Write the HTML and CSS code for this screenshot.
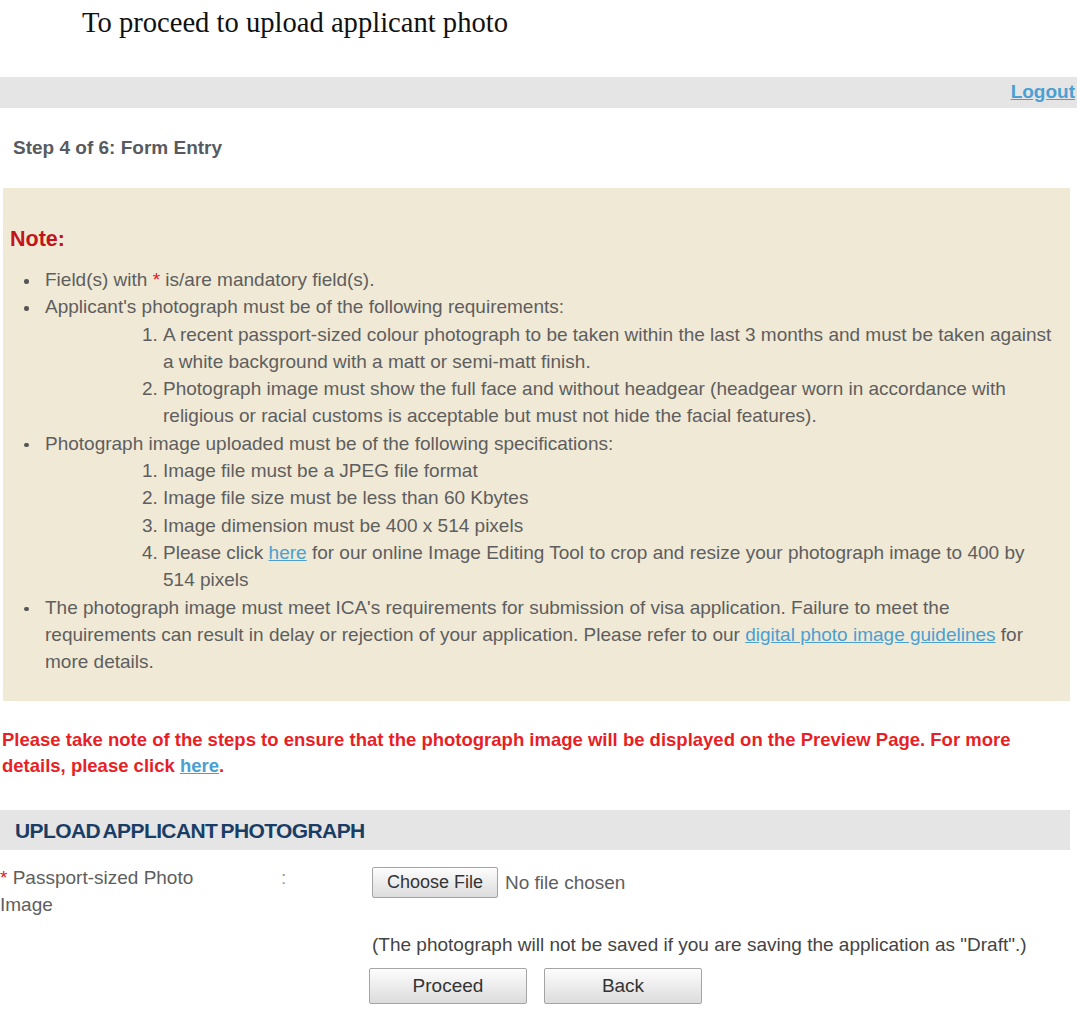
FILE: index.html
```html
<!DOCTYPE html>
<html>
<head>
<meta charset="utf-8">
<link rel="stylesheet" href="styles.css">
</head>
<body>
<h1 class="doc-title">To proceed to upload applicant photo</h1>
<div class="topbar"><a class="logout" href="#">Logout</a></div>
<div class="step">Step 4 of 6: Form Entry</div>
<div class="note-box">
  <div class="note-title">Note:</div>
  <ul class="note-list">
    <li>Field(s) with <span class="star">*</span> is/are mandatory field(s).</li>
    <li>Applicant's photograph must be of the following requirements:
      <ol class="sub-list">
        <li>A recent passport-sized colour photograph to be taken within the last 3 months and must be taken against a white background with a matt or semi-matt finish.</li>
        <li>Photograph image must show the full face and without headgear (headgear worn in accordance with religious or racial customs is acceptable but must not hide the facial features).</li>
      </ol>
    </li>
    <li>Photograph image uploaded must be of the following specifications:
      <ol class="sub-list">
        <li>Image file must be a JPEG file format</li>
        <li>Image file size must be less than 60 Kbytes</li>
        <li>Image dimension must be 400 x 514 pixels</li>
        <li>Please click <a href="#" class="link">here</a> for our online Image Editing Tool to crop and resize your photograph image to 400 by 514 pixels</li>
      </ol>
    </li>
    <li>The photograph image must meet ICA's requirements for submission of visa application. Failure to meet the requirements can result in delay or rejection of your application. Please refer to our <a href="#" class="link">digital photo image guidelines</a> for more details.</li>
  </ul>
</div>
<p class="warning">Please take note of the steps to ensure that the photograph image will be displayed on the Preview Page. For more details, please click <a href="#" class="link">here</a>.</p>
<div class="section-head">UPLOAD APPLICANT PHOTOGRAPH</div>
<div class="form-row">
  <div class="label"><span class="star">*</span> Passport-sized Photo Image</div>
  <div class="colon">:</div>
  <div class="field">
    <div class="file-line"><button class="btn file-btn" type="button">Choose File</button><span class="no-file">No file chosen</span></div>
    <div class="hint">(The photograph will not be saved if you are saving the application as "Draft".)</div>
    <div class="actions"><button class="btn action-btn" type="button">Proceed</button><button class="btn action-btn" type="button">Back</button></div>
  </div>
</div>
</body>
</html>
```
FILE: styles.css
```css
html, body {
  margin: 0;
  padding: 0;
  background: #ffffff;
}
body {
  width: 1080px;
  font-family: "Liberation Sans", Arial, sans-serif;
  font-size: 19px;
  color: #5e5e5e;
}
.doc-title {
  font-family: "Liberation Serif", "Times New Roman", serif;
  font-weight: normal;
  font-size: 28.6px;
  line-height: 34px;
  color: #111;
  margin: 0;
  padding: 6px 0 0 82px;
  height: 77px;
  box-sizing: border-box;
}
.topbar {
  background: #e5e5e5;
  height: 31px;
  width: 1077px;
  display: flex;
  justify-content: flex-end;
  align-items: flex-start;
}
.logout {
  font-weight: bold;
  font-size: 19px;
  color: #4b9fd1;
  text-decoration: underline;
  padding-right: 2px;
  line-height: 29px;
}
.step {
  font-weight: bold;
  font-size: 19px;
  color: #575b60;
  padding-left: 13px;
  height: 80px;
  line-height: 80px;
}
.note-box {
  background: #f0e9d6;
  margin-left: 3px;
  width: 1067px;
  height: 513px;
  padding: 38px 13px 0 0;
  box-sizing: border-box;
}
.note-title {
  color: #c2141b;
  font-weight: bold;
  font-size: 21.5px;
  line-height: 26px;
  padding-left: 7px;
  margin-bottom: 14px;
}
.note-list {
  margin: 0;
  padding-left: 42px;
  line-height: 27.3px;
  list-style: none;
}
.note-list > li {
  position: relative;
}
.note-list > li::before {
  content: "";
  position: absolute;
  left: -21px;
  top: 13px;
  width: 4.5px;
  height: 4.5px;
  border-radius: 50%;
  background: #555;
}
.sub-list {
  margin: 0;
  padding-left: 118px;
}
.star {
  color: #e8141e;
}
.link {
  color: #4b9fd1;
  text-decoration: underline;
}
.warning {
  color: #e81f26;
  font-weight: bold;
  font-size: 18.5px;
  line-height: 26px;
  margin: 0;
  padding: 26px 40px 31px 2px;
}
.section-head {
  background: #e5e5e5;
  width: 1070px;
  height: 40px;
  line-height: 40px;
  padding: 1px 0 0 15px;
  font-weight: bold;
  font-size: 21px;
  color: #1a3d66;
  letter-spacing: -0.6px;
  word-spacing: -2px;
  box-sizing: border-box;
}
.form-row {
  display: flex;
  padding-top: 14px;
  line-height: 27px;
}
.label {
  width: 210px;
}
.colon {
  width: 162px;
  padding-left: 71px;
  box-sizing: border-box;
  color: #999;
}
.field {
  display: flex;
  flex-direction: column;
}
.btn {
  font-family: "Liberation Sans", Arial, sans-serif;
  color: #333;
  background: linear-gradient(#fdfdfd, #dcdcdc);
  border: 1px solid #a4a4a4;
  border-radius: 2px;
  padding: 0;
  cursor: pointer;
}
.file-line {
  display: flex;
  align-items: center;
  margin-top: 3px;
}
.file-btn {
  width: 126px;
  height: 31px;
  font-size: 18px;
  margin-right: 7px;
}
.no-file {
  color: #5e5e5e;
}
.hint {
  margin-top: 33px;
  color: #444;
}
.actions {
  display: flex;
  gap: 17px;
  margin-top: 10px;
  margin-left: -3px;
}
.action-btn {
  width: 158px;
  height: 36px;
  font-size: 19px;
}
```
